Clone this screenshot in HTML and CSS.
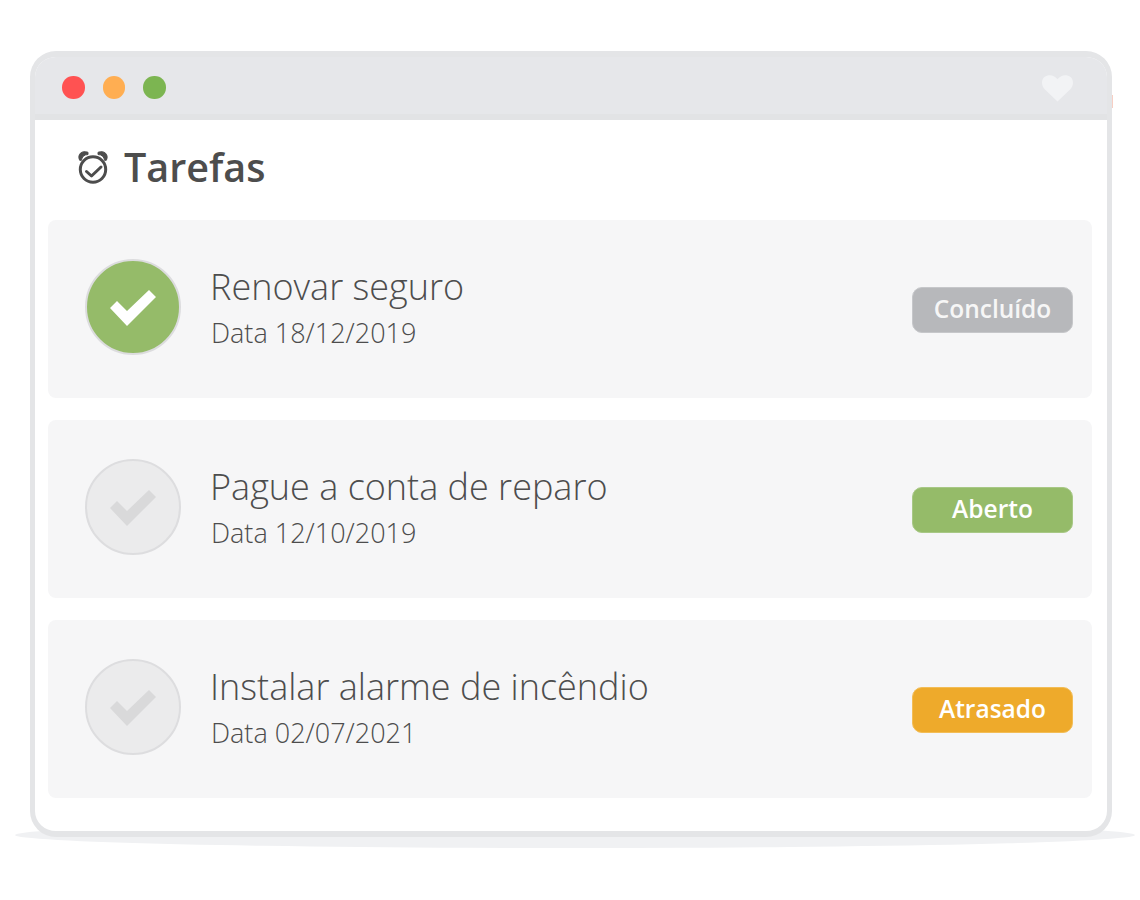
FILE: index.html
```html
<!DOCTYPE html>
<html lang="pt">
<head>
<meta charset="utf-8">
<title>Tarefas</title>
<link rel="stylesheet" href="styles.css">
</head>
<body>
<div class="scene">
  <div class="floor"></div>
  <div class="sliver"></div>
  <div class="window">
    <div class="titlebar">
      <div class="lights">
        <span class="light red"></span>
        <span class="light amber"></span>
        <span class="light green"></span>
      </div>
      <svg class="heart" viewBox="0 0 32 28"><path d="M16 27.500 3 15C-1 11-1 5 2.500 2.200 6.500-1 12-.5 16 4.500 20-.5 25.500-1 29.500 2.200 33 5 33 11 29 15Z"/></svg>
    </div>
    <div class="content">
      <h1 class="heading">
        <svg class="alarm" viewBox="0 0 30 33"><circle cx="15" cy="18.500" r="12.700"/><path d="M8.500 20.500l5 4.500 9.500-9"/><path class="bell" d="M1.500 9C-1 3.500 3.500-1 10 1.300L10 3.500C6 3.500 3.800 6 3.500 9ZM28.500 9C31 3.500 26.500-1 20 1.300L20 3.500C24 3.500 26.200 6 26.500 9Z"/></svg>
        Tarefas
      </h1>
      <div class="tasks">
        <div class="task">
          <div class="check done"><svg viewBox="0 0 46 36"><path d="M0 18 7 11 17 21 39 0 46 7 17 36Z"/></svg></div>
          <div class="info">
            <div class="name">Renovar seguro</div>
            <div class="date">Data 18/12/2019</div>
          </div>
          <span class="badge grey">Concluído</span>
        </div>
        <div class="task">
          <div class="check"><svg viewBox="0 0 46 36"><path d="M0 18 7 11 17 21 39 0 46 7 17 36Z"/></svg></div>
          <div class="info">
            <div class="name">Pague a conta de reparo</div>
            <div class="date">Data 12/10/2019</div>
          </div>
          <span class="badge olive">Aberto</span>
        </div>
        <div class="task">
          <div class="check"><svg viewBox="0 0 46 36"><path d="M0 18 7 11 17 21 39 0 46 7 17 36Z"/></svg></div>
          <div class="info">
            <div class="name">Instalar alarme de incêndio</div>
            <div class="date">Data 02/07/2021</div>
          </div>
          <span class="badge orange">Atrasado</span>
        </div>
      </div>
    </div>
  </div>
</div>
</body>
</html>
```
FILE: styles.css
```css
* { box-sizing: border-box; }
html, body { margin: 0; background: #fff; }
body { font-family: "Open Sans", sans-serif; color: #4d4d4d; }
.scene { position: relative; width: 1140px; height: 900px; padding: 51px 28px 0 30px; }
.floor { position: absolute; left: 15px; top: 822px; width: 1120px; height: 26px; border-radius: 50%; background: #f0f1f3; }
.sliver { position: absolute; left: 1112px; top: 95px; width: 1px; height: 13px; background: #f7cfc4; }
.window { position: relative; height: 786px; border: solid #e4e5e7; border-width: 6px 5px; border-radius: 26px; background: #fff; overflow: hidden; }
.titlebar { height: 63px; background: #e6e7ea; border-bottom: 6px solid #e2e3e5; display: flex; align-items: center; justify-content: space-between; padding: 4px 34px 0 27px; }
.lights { display: flex; gap: 18px; }
.light { width: 22.500px; height: 22.500px; border-radius: 50%; }
.red { background: #ff5252; }
.amber { background: #ffae52; }
.green { background: #7cb551; }
.heart { width: 31px; height: 27px; fill: #f2f3f5; margin-top: 2px; }
.content { padding: 0 15px 0 13px; }
.heading { margin: 0; height: 100px; display: flex; align-items: center; gap: 16px; padding: 0 0 6px 30px; font-size: 39.500px; font-weight: 600; color: #4d4d4d; }
.alarm { width: 30px; height: 33px; fill: none; stroke: #4d4d4d; stroke-width: 3; stroke-linecap: round; stroke-linejoin: round; flex: none; }
.alarm .bell { fill: #4d4d4d; stroke-width: 1; }
.tasks { display: flex; flex-direction: column; gap: 22px; }
.task { height: 178px; background: #f6f6f7; border-radius: 8px; display: flex; align-items: center; padding: 0 19px 0 37px; }
.check { width: 96px; height: 96px; border-radius: 50%; background: #ebebec; border: 2px solid #dddddf; display: flex; align-items: center; justify-content: center; margin-top: -4px; flex: none; }
.check svg { width: 46px; height: 36px; fill: #d9d9da; margin-top: 2px; }
.check.done { background: #95bb69; border-color: #dcdcde; }
.check.done svg { fill: #fff; }
.info { flex: 1; margin-left: 29px; margin-top: -3px; }
.name { font-size: 36px; font-weight: 300; line-height: 46px; color: #4d4d4d; }
.date { font-size: 27px; font-weight: 300; line-height: 36px; color: #4d4d4d; margin: 5px 0 0 1px; }
.badge { width: 161px; height: 46px; border-radius: 10px; display: flex; align-items: center; justify-content: center; font-size: 24.500px; font-weight: 600; color: #fff; margin-top: 1px; padding-bottom: 2px; }
.grey { background: #b7b8bb; border: 1px solid #c6c7ca; color: #f6f6f6; }
.olive { background: #95bb69; border: 1px solid #a8c886; }
.orange { background: #eeaa2b; border: 1px solid #f3bd56; }
```
